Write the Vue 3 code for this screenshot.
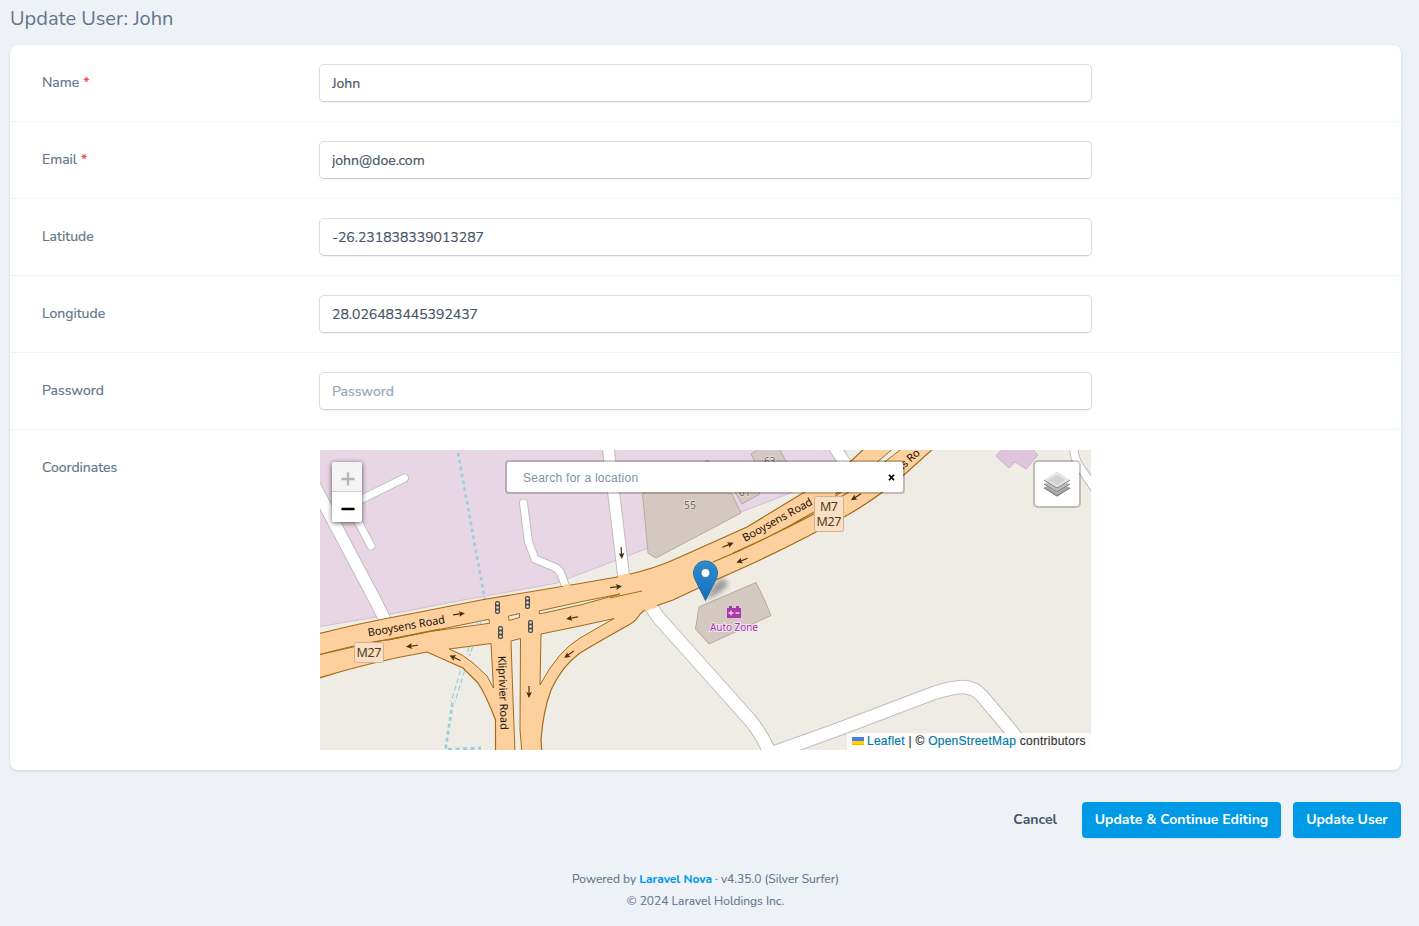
<script setup>
import { ref } from 'vue'

const fields = ref([
  { label: 'Name', required: true, value: 'John' },
  { label: 'Email', required: true, value: 'john@doe.com' },
  { label: 'Latitude', value: '-26.231838339013287' },
  { label: 'Longitude', value: '28.026483445392437' },
  { label: 'Password', value: '', placeholder: 'Password' },
])
const minorRoads = [
  { d: 'M-6 35L0 46L55 150L65 170', w: 12 },
  { d: 'M14 63L42 49L84.500 28', w: 7.6 },
  { d: 'M33 62L51 96', w: 7.6 },
  { d: 'M203.500 53L208.500 92L215 109L234 117Q239 119 241 124L247 140', w: 7.6 },
  { d: 'M288 -4L304 129', w: 11.5 },
  { d: 'M325 148L332 158L338 167L430 270Q441 283 450 303', w: 13 },
  { d: 'M444 306L515 280.5L614 243Q633 237 643 237Q654 237 662 246L689 278L708 303', w: 13 },
  { d: 'M754 -2Q754 9 760 17L775 39', w: 8 },
  { d: 'M510 -10L528 18', w: 12 },
]
const arrows = [
  [139, 164, -8], [92, 196, 173], [135, 208, 205], [249, 204.5, 143],
  [252, 168, 170], [209, 242, 90], [296, 137, -6], [408, 95, -22],
  [422, 110.5, 158], [301.5, 103, 86], [536, 47, 148],
]
const lights = [[177.5, 157.5], [180.5, 182.5], [207.5, 152.5], [210.5, 176.5]]
</script>

<template>
  <main class="page">
    <h1>Update User: John</h1>
    <form class="card" @submit.prevent>
      <div v-for="f in fields" :key="f.label" class="row">
        <label>{{ f.label }}<span v-if="f.required" class="req">*</span></label>
        <input v-model="f.value" :placeholder="f.placeholder" type="text" />
      </div>
      <div class="row map-row">
        <label>Coordinates</label>
        <div class="map">
          <svg class="tiles" width="771" height="300" viewBox="0 0 771 300">
            <defs>
              <linearGradient id="pin" x1="0" y1="0" x2="0" y2="1">
                <stop offset="0" stop-color="#2f8bcb" /><stop offset="1" stop-color="#126fc0" />
              </linearGradient>
              <filter id="soft" x="-50%" y="-50%" width="200%" height="200%"><feGaussianBlur stdDeviation="2.500" /></filter>
            </defs>
            <rect width="771" height="300" fill="#efece5" />
            <path d="M-1 -1V176.7L50 168L143 150L235 133.5L260 124L327 98.5L421 62L473 42L510 22L526 -1Z" fill="#e8d6e4" stroke="#d2bfd0" />
            <g fill="#d4c9c0" stroke="#b9a9a0">
              <path d="M322.500 43.500L380 16L387 10L393 14L408 43L412 44L421 63L336 108L328 103Z" />
              <path d="M406 27L422 54L440 44L430 24Z" />
              <path d="M431 4L440 -2H459L468 15L440 22Z" />
              <path d="M379 157L436 132.500L444 149L451 165.500L389 194L375.500 179Z" />
            </g>
            <path d="M682 -1L676 6L689 18L695 12L706 19L718 5L712 -1Z" fill="#dfc5dc" stroke="#cfb0cb" />

            <g fill="none" stroke="#9acfdd">
              <path d="M138 3L165 150" stroke-width="2.700" stroke-dasharray="3.500 3.500" />
              <path d="M154 190L135 252M150 190L131 252" stroke-width="1.200" stroke-dasharray="5 3" />
              <path d="M132.500 253L125.500 300" stroke-width="2.700" stroke-dasharray="4 3" />
              <path d="M128 299.500L161 298" stroke-width="3" stroke-dasharray="4 3.500" />
            </g>

            <g fill="none" stroke-linecap="round" stroke-linejoin="round">
              <path v-for="r in minorRoads" :key="'c' + r.d" :d="r.d" stroke="#bfbdbd" :stroke-width="r.w + 1.4" />
              <path v-for="r in minorRoads" :key="r.d" :d="r.d" stroke="#fff" :stroke-width="r.w - 0.6" />
            </g>

            <path d="M-4 184.500Q40 173 90 164L161 150L260 133.500L300 126.500Q335 119 360 107L427 77L483 43Q508 30 530 12L546 -3H615L585 24Q555 50 524 67Q475 94 427 116L387 134L353 150L327 159Q322 161 318 167Q315 172 305 177Q280 191 260 203Q242 216 231 240Q223 262 221 290L222 303H175.500V270Q167 247 158 233L143 218L107 202Q50 212 -4 229Z" fill="#fdd09d" stroke="#a06d18" stroke-width="1.200" />
            <path d="M298 126.800L310 124.500M325 160L337 156M243 136.300L250 135" stroke="#fdd09d" stroke-width="2.500" />
            <g fill="#efece5" stroke="#a06d18" stroke-width="1">
              <path d="M129 199L171 193.500L173.500 238L167 226L153 213Q143 204 129 199Z" />
              <path d="M191 191L200.500 188.500L200 280L202 303H195L193 250Z" />
              <path d="M221 184L260 176L294 168.500L260 188Q238 201 220 235Z" />
              <path d="M68 190L169 169.300L169.500 173.300L110 181.500Z" />
              <path d="M188.500 166L199.500 163.500V167.500L189 170.500Z" />
              <path d="M219 161L262 151.500L300 144L262 154.500L219.500 164Z" />
              <path d="M575 -3L536 30L515 44L540 31L584 -3Z" />
            </g>
            <path d="M152.500 197L149.500 206M149 197L147 204M158 172.500L156.500 175M161 172L159.500 174.500" stroke="#9acfdd" stroke-width="1.200" stroke-dasharray="5 2" />
            <path d="M-2 205Q60 190 120 179M-2 205Q50 191 68 190M290 148L322 141" fill="none" stroke="#a06d18" />
            <path d="M393 112Q445 91 494 62L536 31M413 103Q450 87 494 64L538 36" fill="none" stroke="#a06d18" stroke-width="1.200" />

            <g v-for="(a, i) in arrows" :key="i" :transform="`translate(${a[0]} ${a[1]}) rotate(${a[2]})`">
              <path d="M-6 0H3" stroke="#49300c" stroke-width="1.200" /><path d="M6 0L0-2.900L1.200 0L0 2.900Z" fill="#49300c" />
            </g>
            <g v-for="(t, i) in lights" :key="'t' + i" :transform="`translate(${t[0]} ${t[1]})`">
              <rect x="-2.500" y="-6.500" width="5" height="13" rx="2" fill="#4c4c4e" />
              <circle v-for="y in [-4, 0, 4]" :key="y" :cy="y" r="1.300" fill="#f5dcc0" />
            </g>

            <g class="road-label">
              <text transform="translate(48.500 186.500) rotate(-10)" textLength="78">Booysens Road</text>
              <text transform="translate(425 92) rotate(-29)" textLength="78">Booysens Road</text>
              <text transform="translate(178 206) rotate(88)" textLength="74">Kliprivier Road</text>
              <text transform="translate(580 22.500) rotate(-42)" textLength="28">ns Ro</text>
            </g>
            <g class="house-number">
              <text x="364" y="58.500" textLength="12">55</text><text x="419" y="45.500">61</text><text x="444" y="15">63</text>
            </g>
            <g class="shield">
              <rect x="34.500" y="192.500" width="29" height="20" rx="2" /><text x="36.500" y="207" textLength="25">M27</text>
              <rect x="494.500" y="46.500" width="29" height="35" rx="2" /><text x="500" y="61" textLength="18">M7</text><text x="496.500" y="75.500" textLength="25">M27</text>
            </g>
            <path d="M407 158H409V156H412V158H416V156H419V158H421V168H407Z" fill="#ac39ac" />
            <path d="M408.500 163H413.500M411 160.500V165.500M415.500 163H419.500" stroke="#ead9df" stroke-width="1.300" />
            <text class="poi" x="390" y="180.500" textLength="48">Auto Zone</text>

            <path d="M386 150L393 136Q402 124 408 133Q407 140 386 150Z" fill="#222" opacity=".4" filter="url(#soft)" />
            <g transform="translate(373 110.500)">
              <path d="M12.500.5C5.700.5.5 5.800.5 12.500C.5 16 2 19 3.500 22L12.500 40L21.500 22C23 19 24.500 16 24.500 12.500C24.500 5.800 19.300.5 12.500.5Z" fill="url(#pin)" stroke="#2b6f9f" />
              <circle cx="12.500" cy="12.500" r="4.500" fill="#fff" stroke="#2675ad" />
            </g>
          </svg>
          <div class="zoom-control">
            <button type="button" class="disabled" aria-label="Zoom in"><svg width="14" height="14" viewBox="0 0 14 14"><path d="M0.500 7H13.500M7 .5V13.500" stroke="#b5b5b5" stroke-width="2.300" /></svg></button>
            <button type="button" aria-label="Zoom out"><svg width="14" height="14" viewBox="0 0 14 14"><path d="M1.500 7H12.500" stroke="#000" stroke-width="2.500" stroke-linecap="round" /></svg></button>
          </div>
          <div class="search"><span>Search for a location</span><svg width="7" height="7" viewBox="0 0 7 7"><path d="M1 .7L6 6.300M6 .7L1 6.300" stroke="#000" stroke-width="1.700" /></svg></div>
          <div class="layers">
            <svg width="26" height="26" viewBox="0 0 26 26">
              <path d="M0 17L13 9L26 17L13 25.500Z" fill="#a4a4a4" /><path d="M0 17L13 25L26 17" fill="none" stroke="#777" />
              <path d="M0 13L13 5L26 13L13 21.500Z" fill="#bcbcbc" stroke="#fff" stroke-width=".7" /><path d="M0 13L13 21L26 13" fill="none" stroke="#777" />
              <path d="M0 9L13 .5L26 9L13 17Z" fill="#e6e6e6" /><path d="M4.500 9L13 4L21.500 9L13 14.500Z" fill="#d2d2d2" /><path d="M0 9L13 17L26 9" fill="none" stroke="#888" />
            </svg>
          </div>
          <div class="attribution">
            <svg width="12" height="8" viewBox="0 0 12 8"><path fill="#4c7be1" d="M0 0h12v4H0z" /><path fill="#ffd500" d="M0 4h12v3H0z" /><path fill="#e0bc00" d="M0 7h12v1H0z" /></svg>
            <span><a>Leaflet</a> | © <a>OpenStreetMap</a> contributors</span>
          </div>
        </div>
      </div>
    </form>
    <div class="actions">
      <a class="cancel">Cancel</a>
      <button type="button" class="primary continue">Update &amp; Continue Editing</button>
      <button type="button" class="primary update">Update User</button>
    </div>
    <footer>
      <p>Powered by <a>Laravel Nova</a> · v4.35.0 (Silver Surfer)</p>
      <p>© 2024 Laravel Holdings Inc.</p>
    </footer>
  </main>
</template>

<style>
body { background: #eef2f7; margin: 0; }
</style>
<style scoped>
* { box-sizing: border-box; }
.page { width: 1419px; height: 926px; padding: 5px 18px 0 10px; overflow: hidden; background: #eef2f7; color: #64748b; font-family: Nunito, Lato, "Open Sans", sans-serif; font-size: 14px; }
h1 { margin: 0 0 12px; font-size: 20px; line-height: 28px; font-weight: 400; white-space: nowrap; }
.card { height: 725px; background: #fff; border-radius: 8px; box-shadow: 0 1px 3px rgba(0,0,0,.12); }
.row { display: flex; align-items: flex-start; height: 77px; padding: 19px 0 0 32px; border-bottom: 1px solid #eff2f6; }
.map-row { height: 340px; padding-top: 20px; border-bottom: 0; }
label { flex: 0 0 277px; padding-top: 9px; line-height: 20px; -webkit-text-stroke: .2px; }
.map-row label { flex-basis: 278px; padding-top: 8px; }
.req { margin-left: 4px; color: #ef4444; }
input { width: 773px; height: 38px; padding: 1px 12px 0; border: 1px solid #dadde1; border-bottom-color: #cbced2; border-radius: 5px; outline: 0; background: #fff; box-shadow: 0 1px 2px rgba(0,0,0,.06); color: #475569; font: 14px Nunito, Lato, "Open Sans", sans-serif; -webkit-text-stroke: .2px; }
input::placeholder { color: #94a3b8; }
.map { position: relative; width: 771px; height: 300px; overflow: hidden; font-family: "Liberation Sans", Arial, sans-serif; }
.tiles { display: block; }
.road-label { font: 11px "Noto Sans", sans-serif; fill: #17120c; }
.house-number { font: 10px "Noto Sans", sans-serif; fill: #666; paint-order: stroke; stroke: #e9e1dc; stroke-width: 1.5px; }
.shield { font: 12.500px "Noto Sans", sans-serif; }
.shield rect { fill: #f8dfc7; stroke: #d7af88; }
.shield text { fill: #563a12; }
.poi { font: 10px "Noto Sans", sans-serif; fill: #a734a7; paint-order: stroke; stroke: #f3e9ed; stroke-width: 2px; }
.zoom-control { position: absolute; left: 12px; top: 12px; width: 30px; border-radius: 2px; box-shadow: 0 1px 5px rgba(0,0,0,.65); }
.zoom-control button { display: flex; align-items: center; justify-content: center; width: 30px; height: 30px; padding: 4px 0 0 1px; border: 0; background: #fff; border-radius: 0 0 2px 2px; }
.zoom-control .disabled { border-bottom: 1px solid #ccc; background: #f4f4f4; border-radius: 2px 2px 0 0; }
.search { position: absolute; left: 185px; top: 10px; width: 400px; height: 34px; display: flex; align-items: center; justify-content: space-between; padding: 1px 8px 0 16px; border: 2px solid rgba(0,0,0,.2); border-radius: 4px; background: #fff; background-clip: padding-box; color: #7f90aa; font-size: 12px; letter-spacing: .25px; }
.layers { position: absolute; right: 10px; top: 10px; width: 48px; height: 48px; display: grid; place-items: center; border: 2px solid rgba(0,0,0,.2); border-radius: 5px; background: #fff; background-clip: padding-box; }
.attribution { position: absolute; right: 0; bottom: 0; height: 17px; width: 244px; display: flex; align-items: center; gap: 3px; padding: 0 5px; background: rgba(255,255,255,.8); color: #333; font-size: 12px; line-height: 17px; letter-spacing: .26px; white-space: nowrap; -webkit-text-stroke: .15px; }
.attribution svg { margin-top: -1px; }
.attribution a { color: #0078a8; }
.actions { display: flex; justify-content: flex-end; align-items: center; height: 36px; margin-top: 32px; font-weight: 700; }
.cancel { margin-right: 25px; padding-bottom: 2px; color: #475569; }
.primary { height: 36px; padding: 0 0 2px; border: 0; border-radius: 4px; background: #0099e5; color: #fff; box-shadow: 0 1px 2px rgba(0,0,0,.08); font: 700 14px Nunito, Lato, "Open Sans", sans-serif; }
.continue { width: 199px; margin-right: 12px; }
.update { width: 108px; }
footer { margin-top: 30px; text-align: center; font-size: 12px; line-height: 22px; -webkit-text-stroke: .1px; }
footer p { margin: 0; }
footer a { color: #0099e5; font-weight: 700; }
</style>
